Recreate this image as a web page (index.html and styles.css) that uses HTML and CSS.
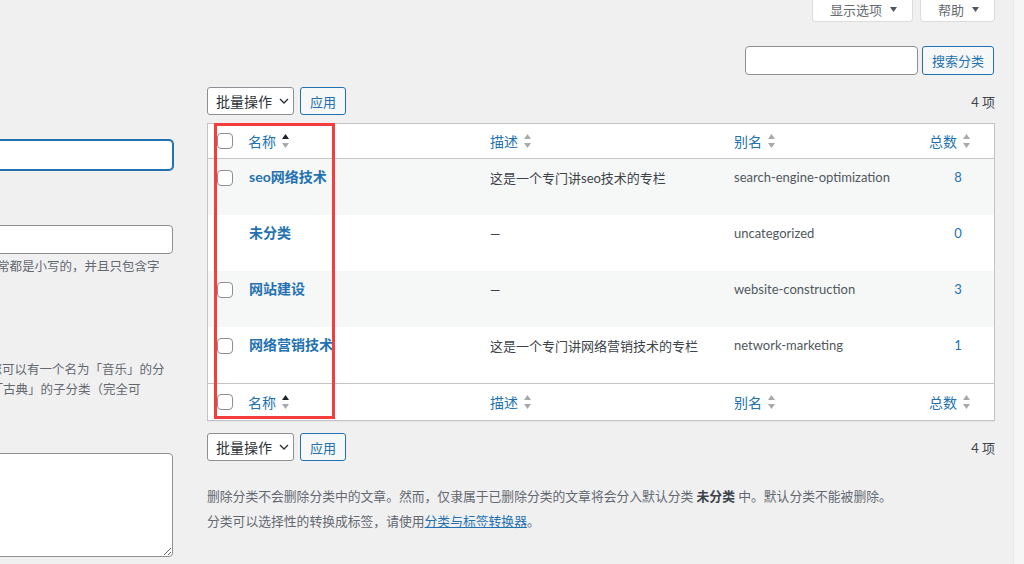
FILE: index.html
```html
<!DOCTYPE html>
<html lang="zh-CN">
<head>
<meta charset="utf-8">
<title>分类</title>
<link rel="stylesheet" href="styles.css">
</head>
<body>
<div class="page">
  <div class="main">
    <div class="screen-meta">
      <button class="meta-btn">显示选项<svg class="meta-arrow" width="7" height="5" viewBox="0 0 7 5"><path d="M0 0H7L3.5 5Z"/></svg></button>
      <button class="meta-btn">帮助<svg class="meta-arrow" width="7" height="5" viewBox="0 0 7 5"><path d="M0 0H7L3.5 5Z"/></svg></button>
    </div>
    <div class="content">
      <div class="col-left">
        <input class="field field-focus" type="text">
        <input class="field field-slug" type="text">
        <p class="help help-a">。通常都是小写的，并且只包含字</p>
        <p class="help help-b">系。您可以有一个名为「音乐」的分</p>
        <p class="help help-c">」和「古典」的子分类（完全可</p>
        <textarea class="area"></textarea>
      </div>
      <div class="col-right">
        <div class="search-box">
          <input class="search-input" type="search">
          <button class="btn-secondary">搜索分类</button>
        </div>
        <div class="tablenav">
          <div class="bulk">
            <div class="select">批量操作<svg width="10" height="6" viewBox="0 0 10 6"><path d="M1 1L5 5L9 1" fill="none" stroke="#2c3338" stroke-width="1.4"/></svg></div>
            <button class="btn-secondary btn-apply">应用</button>
          </div>
          <span class="count">4 项</span>
        </div>
        <div class="table-wrap">
          <table class="list">
            <colgroup>
              <col class="c-cb"><col class="c-name"><col class="c-desc"><col class="c-slug"><col class="c-posts">
            </colgroup>
            <thead>
              <tr>
                <th class="cb"><span class="check"></span></th>
                <th><a class="sort-link">名称<svg class="sort" width="7" height="14" viewBox="0 0 7 14"><path d="M3.5 0L7 5H0Z" fill="#1d2327"/><path d="M0 9H7L3.5 14Z" fill="#a7aaad"/></svg></a></th>
                <th><a class="sort-link">描述<svg class="sort" width="7" height="14" viewBox="0 0 7 14"><path d="M3.5 0L7 5H0Z" fill="#a7aaad"/><path d="M0 9H7L3.5 14Z" fill="#a7aaad"/></svg></a></th>
                <th><a class="sort-link">别名<svg class="sort" width="7" height="14" viewBox="0 0 7 14"><path d="M3.5 0L7 5H0Z" fill="#a7aaad"/><path d="M0 9H7L3.5 14Z" fill="#a7aaad"/></svg></a></th>
                <th class="th-posts"><a class="sort-link">总数<svg class="sort" width="7" height="14" viewBox="0 0 7 14"><path d="M3.5 0L7 5H0Z" fill="#a7aaad"/><path d="M0 9H7L3.5 14Z" fill="#a7aaad"/></svg></a></th>
              </tr>
            </thead>
            <tbody>
              <tr class="alt">
                <td class="cb"><span class="check"></span></td>
                <td class="name"><a>seo网络技术</a></td>
                <td class="desc">这是一个专门讲seo技术的专栏</td>
                <td class="slug">search-engine-optimization</td>
                <td class="posts"><a>8</a></td>
              </tr>
              <tr>
                <td class="cb"></td>
                <td class="name"><a>未分类</a></td>
                <td class="desc">—</td>
                <td class="slug">uncategorized</td>
                <td class="posts"><a>0</a></td>
              </tr>
              <tr class="alt">
                <td class="cb"><span class="check"></span></td>
                <td class="name"><a>网站建设</a></td>
                <td class="desc">—</td>
                <td class="slug">website-construction</td>
                <td class="posts"><a>3</a></td>
              </tr>
              <tr>
                <td class="cb"><span class="check"></span></td>
                <td class="name"><a>网络营销技术</a></td>
                <td class="desc">这是一个专门讲网络营销技术的专栏</td>
                <td class="slug">network-marketing</td>
                <td class="posts"><a>1</a></td>
              </tr>
            </tbody>
            <tfoot>
              <tr>
                <th class="cb"><span class="check"></span></th>
                <th><a class="sort-link">名称<svg class="sort" width="7" height="14" viewBox="0 0 7 14"><path d="M3.5 0L7 5H0Z" fill="#1d2327"/><path d="M0 9H7L3.5 14Z" fill="#a7aaad"/></svg></a></th>
                <th><a class="sort-link">描述<svg class="sort" width="7" height="14" viewBox="0 0 7 14"><path d="M3.5 0L7 5H0Z" fill="#a7aaad"/><path d="M0 9H7L3.5 14Z" fill="#a7aaad"/></svg></a></th>
                <th><a class="sort-link">别名<svg class="sort" width="7" height="14" viewBox="0 0 7 14"><path d="M3.5 0L7 5H0Z" fill="#a7aaad"/><path d="M0 9H7L3.5 14Z" fill="#a7aaad"/></svg></a></th>
                <th class="th-posts"><a class="sort-link">总数<svg class="sort" width="7" height="14" viewBox="0 0 7 14"><path d="M3.5 0L7 5H0Z" fill="#a7aaad"/><path d="M0 9H7L3.5 14Z" fill="#a7aaad"/></svg></a></th>
              </tr>
            </tfoot>
          </table>
          <div class="highlight"></div>
        </div>
        <div class="tablenav tablenav-bottom">
          <div class="bulk">
            <div class="select">批量操作<svg width="10" height="6" viewBox="0 0 10 6"><path d="M1 1L5 5L9 1" fill="none" stroke="#2c3338" stroke-width="1.4"/></svg></div>
            <button class="btn-secondary btn-apply">应用</button>
          </div>
          <span class="count">4 项</span>
        </div>
        <div class="notes">
          <p>删除分类不会删除分类中的文章。然而，仅隶属于已删除分类的文章将会分入默认分类 <strong>未分类</strong> 中。默认分类不能被删除。</p>
          <p>分类可以选择性的转换成标签，请使用<a class="link">分类与标签转换器</a>。</p>
        </div>
      </div>
    </div>
  </div>
  <div class="strip"></div>
</div>
</body>
</html>
```
FILE: styles.css
```css
* { box-sizing: border-box; }
html, body { margin: 0; padding: 0; }
body {
  background: #f0f0f1;
  font-family: "Lato", "Noto Sans CJK SC", sans-serif;
  font-size: 13px;
  color: #3c434a;
  width: 1024px;
  height: 564px;
  overflow: hidden;
}
.page { display: flex; height: 564px; }
.main { flex: 1; min-width: 0; }
.strip { width: 11px; background: #f6f6f6; border-left: 1px solid #e9e9ea; }

/* screen meta */
.screen-meta {
  display: flex;
  justify-content: flex-end;
  gap: 7px;
  padding-right: 18px;
  height: 22px;
}
.meta-btn {
  display: flex;
  align-items: center;
  gap: 8px;
  height: 23px;
  margin-top: -1px;
  padding: 0 15px 2px 17px;
  background: #fff;
  border: 1px solid #dcdcde;
  border-top: none;
  border-radius: 0 0 4px 4px;
  font: inherit;
  color: #646970;
}
.meta-arrow path { fill: #50575e; }

.content { display: flex; }

/* left column */
.col-left {
  width: 300px;
  margin-left: -127px;
  display: flex;
  flex-direction: column;
}
.field {
  width: 100%;
  height: 30px;
  background: #fff;
  border: 1px solid #8c8f94;
  border-radius: 4px;
  margin: 0;
}
.field-focus {
  margin-top: 118px;
  border-color: #2271b1;
  box-shadow: 0 0 0 1px #2271b1;
}
.field-slug { margin-top: 55px; height: 29px; }
.help {
  margin: 0;
  line-height: 20px;
  white-space: nowrap;
  color: #646970;
  font-size: 12.5px;
}
.help-a { margin-top: 3px; padding-left: 99px; }
.help-b { margin-top: 83px; padding-left: 91.5px; }
.help-c { padding-left: 92.5px; }
.area {
  margin-top: 53px;
  width: 100%;
  height: 104px;
  background: #fff;
  border: 1px solid #8c8f94;
  border-radius: 4px;
  resize: vertical;
}

/* right column */
.col-right {
  width: 788px;
  margin-left: 34px;
}
.search-box {
  display: flex;
  justify-content: flex-end;
  gap: 4px;
  margin-top: 24px;
  padding-right: 1px;
}
.search-input {
  width: 173px;
  height: 29px;
  margin: 0;
  background: #fff;
  border: 1px solid #8c8f94;
  border-radius: 4px;
}
.btn-secondary {
  height: 29px;
  padding: 0 9px;
  margin: 0;
  background: #f6f7f7;
  border: 1px solid #2271b1;
  border-radius: 3px;
  color: #2271b1;
  font: inherit;
  font-size: 13px;
}
.tablenav {
  display: flex;
  justify-content: space-between;
  align-items: center;
  margin-top: 12px;
  height: 28px;
}
.bulk { display: flex; gap: 6px; }
.select {
  display: flex;
  align-items: center;
  gap: 7px;
  width: 87px;
  height: 28px;
  padding: 0 0 0 8px;
  background: #fff;
  border: 1px solid #8c8f94;
  border-radius: 3px;
  color: #2c3338;
  font-size: 14px;
}
.btn-apply { height: 28px; width: 46px; padding: 0; }
.count { color: #3c434a; font-size: 13px; }

.table-wrap { position: relative; margin-top: 8px; }
.list {
  width: 788px;
  table-layout: fixed;
  border-spacing: 0;
  background: #fff;
  border: 1px solid #c3c4c7;
  box-shadow: 0 1px 1px rgba(0,0,0,.04);
}
.c-cb { width: 32px; }
.c-name { width: 242px; }
.c-desc { width: 244px; }
.c-slug { width: 195px; }
.c-posts { width: 73px; }

thead th, tfoot th {
  height: 35px;
  padding: 0 8px;
  text-align: left;
  font-weight: normal;
  vertical-align: middle;
}
thead th { border-bottom: 1px solid #c3c4c7; }
tfoot th { border-top: 1px solid #c3c4c7; height: 37px; padding-top: 0; }
.sort-link {
  display: inline-flex;
  align-items: center;
  gap: 6px;
  color: #2271b1;
  font-size: 14px;
}
.sort { display: block; }
.th-posts { text-align: right !important; padding-right: 24px !important; }

th.cb, td.cb { padding: 0 0 0 9px; }
.check {
  display: block;
  width: 16px;
  height: 16px;
  border: 1px solid #8c8f94;
  border-radius: 4px;
  background: #fff;
}
tbody tr { height: 56px; }
tbody tr.alt td { background: #f6f7f7; }
tbody td {
  vertical-align: top;
  padding: 8px 8px 0;
  line-height: 20px;
  height: 56px;
}
tbody td.cb { padding-top: 11px; }
td.name { padding-left: 9px; }
td.name a {
  color: #2271b1;
  font-weight: 700;
  font-size: 14px;
}
td.desc { color: #3c434a; font-size: 13px; padding-top: 9px; }
td.slug { color: #50575e; font-size: 13px; }
td.posts { text-align: center; padding-left: 9px; }
td.posts a { color: #2271b1; }

.highlight {
  position: absolute;
  left: 7px;
  top: 0;
  width: 121px;
  height: 296px;
  border: 3px solid #f53d3d;
  pointer-events: none;
}

.notes { margin-top: 23px; color: #646970; }
.notes p { margin: 0; line-height: 25px; font-size: 12.8px; white-space: nowrap; }
.notes strong { color: #3c434a; font-weight: 700; }
.link { color: #2271b1; text-decoration: underline; }
```
